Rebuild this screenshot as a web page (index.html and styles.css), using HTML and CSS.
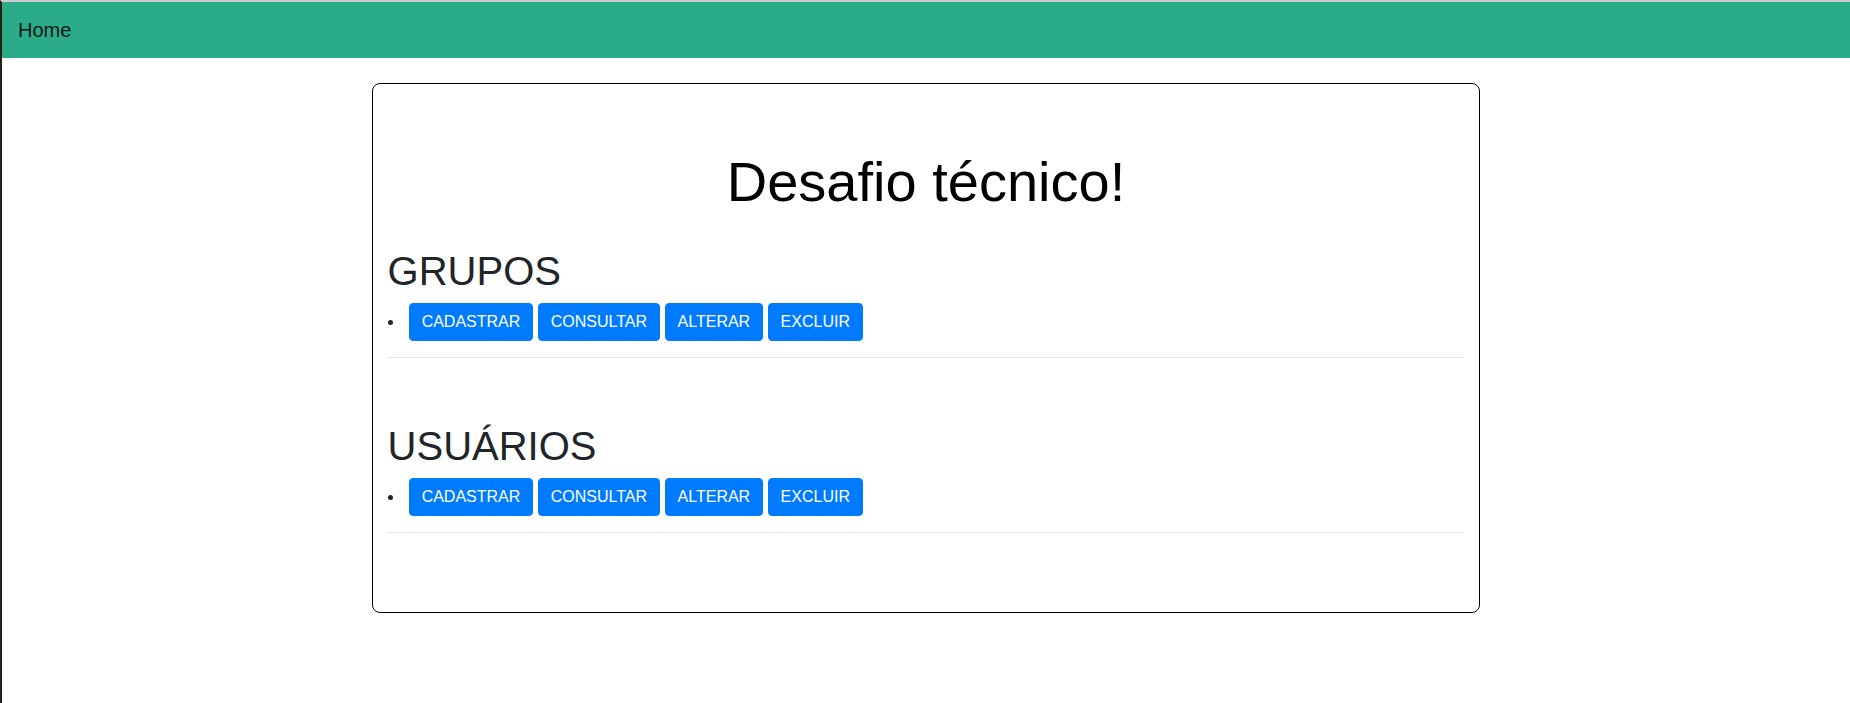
FILE: index.html
```html
<!DOCTYPE html>
<html lang="pt-BR">
<head>
<meta charset="utf-8">
<title>Desafio técnico</title>
<link rel="stylesheet" href="styles.css">
</head>
<body>
<nav class="navbar">
  <a class="brand" href="#">Home</a>
</nav>
<main class="card">
  <h1 class="title">Desafio técnico!</h1>
  <section class="group">
    <h2 class="group-title">GRUPOS</h2>
    <ul class="actions">
      <li>
        <button class="btn">CADASTRAR</button>
        <button class="btn">CONSULTAR</button>
        <button class="btn">ALTERAR</button>
        <button class="btn">EXCLUIR</button>
      </li>
    </ul>
    <hr class="rule">
  </section>
  <section class="group">
    <h2 class="group-title">USUÁRIOS</h2>
    <ul class="actions">
      <li>
        <button class="btn">CADASTRAR</button>
        <button class="btn">CONSULTAR</button>
        <button class="btn">ALTERAR</button>
        <button class="btn">EXCLUIR</button>
      </li>
    </ul>
    <hr class="rule">
  </section>
</main>
</body>
</html>
```
FILE: styles.css
```css
* { box-sizing: border-box; }

html, body {
  height: 100%;
}

body {
  margin: 0;
  border-left: 2px solid #2a1e18;
  border-top: 2px solid #cdcdcd;
  background: #fff;
  font-family: "Liberation Sans", Arial, sans-serif;
  font-size: 16px;
  line-height: 1.5;
  color: #212529;
}

.navbar {
  height: 56px;
  background: #2aac8a;
  padding: 8px 16px;
  display: flex;
  align-items: center;
}

.brand {
  font-size: 20px;
  line-height: 30px;
  padding: 5px 0;
  color: rgba(0, 0, 0, 0.9);
  text-decoration: none;
}

.card {
  width: 60%;
  margin: 25px auto 0;
  border: 1px solid #000;
  border-radius: 8px;
  padding: 15px;
}

.title {
  margin: 49px 0 32px;
  font-size: 56px;
  font-weight: 400;
  line-height: 1.2;
  text-align: center;
  color: #000;
}

.group {
  margin-bottom: 64px;
}

.group-title {
  margin: 0 0 8px;
  font-size: 40px;
  font-weight: 400;
  line-height: 1.2;
  color: #212529;
}

.actions {
  list-style: none;
  margin: 0 0 16px;
  padding: 0;
}

.actions li::before {
  content: "";
  display: inline-block;
  width: 5px;
  height: 5px;
  border-radius: 50%;
  background: #212529;
  vertical-align: middle;
  margin-right: 11.6px;
}

.btn {
  display: inline-block;
  font-family: "Liberation Sans", Arial, sans-serif;
  font-size: 16px;
  line-height: 1.5;
  padding: 6px 12px;
  border: 1px solid #007bff;
  border-radius: 4px;
  background: #007bff;
  color: #fff;
  vertical-align: baseline;
  margin: 0;
}

.rule {
  margin: 16px 0;
  border: 0;
  border-top: 1px solid rgba(0, 0, 0, 0.1);
}
```
